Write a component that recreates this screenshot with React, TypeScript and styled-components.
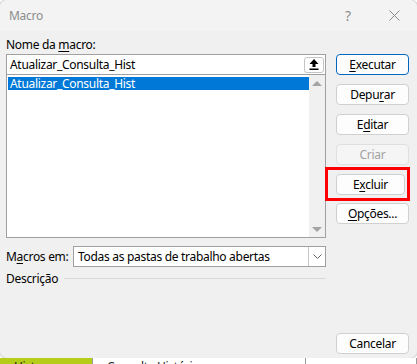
import React from 'react';
import styled, { createGlobalStyle } from 'styled-components';

const GlobalStyle = createGlobalStyle`
  html, body {
    margin: 0;
    padding: 0;
    background: #ffffff;
  }
  body {
    font-family: "Noto Sans", "Open Sans", sans-serif;
    font-size: 12px;
    letter-spacing: -0.3px;
    color: #000;
  }
`;

const Screen = styled.div`
  width: 417px;
  height: 364px;
  overflow: hidden;
  display: flex;
  flex-direction: column;
  background: #ffffff;
`;

const Dialog = styled.div`
  height: 358px;
  flex: none;
  border-radius: 7px;
  overflow: hidden;
  background: #f0f0f0;
  display: flex;
  flex-direction: column;
  box-shadow: 0 0 0 1px #d6d6d6;
`;

const TitleBar = styled.div`
  height: 31px;
  flex: none;
  display: flex;
  align-items: center;
  background: #f3f3f3;
  padding-left: 9px;
`;

const Title = styled.div`
  flex: 1;
  color: #8c8c8c;
  font-size: 12px;
`;

const TitleButton = styled.div`
  width: 46px;
  height: 31px;
  display: flex;
  align-items: center;
  justify-content: center;
  color: #8c8c8c;
  font-size: 14px;
`;

const Body = styled.div`
  flex: 1;
  display: grid;
  grid-template-columns: 320px 73px;
  column-gap: 10px;
  padding: 6px 8px 4px 6px;
`;

const LeftColumn = styled.div`
  display: flex;
  flex-direction: column;
`;

const RightColumn = styled.div`
  display: flex;
  flex-direction: column;
  padding-top: 17px;
`;

const Label = styled.div`
  height: 17px;
  line-height: 15px;
  white-space: nowrap;
`;

const U = styled.span`
  text-decoration: underline;
  text-underline-offset: 2px;
`;

const NameInput = styled.div`
  height: 19px;
  border: 1px solid #a0a0a0;
  border-bottom: none;
  background: #fff;
  display: flex;
  align-items: center;
  padding-left: 3px;
  padding-right: 1px;
`;

const InputText = styled.div`
  flex: 1;
  white-space: nowrap;
`;

const UpButton = styled.div`
  width: 18px;
  height: 14px;
  border: 1px solid #c4c4c4;
  border-radius: 3px;
  background: #fff;
  display: flex;
  align-items: center;
  justify-content: center;
`;

const ListBox = styled.div`
  height: 159px;
  border: 1px solid #a0a0a0;
  background: #fff;
  display: flex;
  padding: 2px 0 1px 1px;
`;

const ListItems = styled.div`
  flex: 1;
`;

const ListItem = styled.div<{ selected?: boolean }>`
  height: 13px;
  line-height: 13px;
  padding-left: 2px;
  background: ${(p) => (p.selected ? '#0078d7' : 'transparent')};
  color: ${(p) => (p.selected ? '#fff' : '#000')};
`;

const ScrollBar = styled.div`
  width: 16px;
  background: #f0f0f0;
  margin-top: -2px;
  margin-bottom: -1px;
  display: flex;
  flex-direction: column;
  justify-content: space-between;
  align-items: center;
  padding: 6px 0 5px;
`;

const Arrow = styled.div<{ down?: boolean }>`
  width: 0;
  height: 0;
  border-left: 5px solid transparent;
  border-right: 5px solid transparent;
  ${(p) =>
    p.down
      ? 'border-top: 5px solid #a3a3a3;'
      : 'border-bottom: 5px solid #a3a3a3;'}
`;

const SourceRow = styled.div`
  margin-top: 8px;
  display: flex;
  align-items: center;
  height: 21px;
`;

const SourceLabel = styled.div`
  width: 67px;
  white-space: nowrap;
`;

const Select = styled.div`
  flex: 1;
  height: 19px;
  border: 1px solid #a0a0a0;
  background: #fff;
  display: flex;
  align-items: center;
  padding-left: 4px;
`;

const SelectText = styled.div`
  flex: 1;
  white-space: nowrap;
`;

const Chevron = styled.div`
  width: 16px;
  height: 19px;
  border-left: 1px solid #c8c8c8;
  display: flex;
  align-items: center;
  justify-content: center;
`;

const DescRow = styled.div`
  margin-top: 2px;
  display: flex;
  align-items: center;
  gap: 6px;
  height: 18px;
`;

const DescLine = styled.div`
  flex: 1;
  height: 1px;
  background: #d8d8d8;
`;

const Button = styled.div<{ primary?: boolean; disabled?: boolean }>`
  height: 21px;
  flex: none;
  box-sizing: border-box;
  border: 1px solid ${(p) => (p.primary ? '#0067c0' : p.disabled ? '#e0e0e0' : '#d0d0d0')};
  border-radius: 4px;
  background: ${(p) => (p.disabled ? '#f5f5f5' : '#fdfdfd')};
  color: ${(p) => (p.disabled ? '#a2a2a2' : '#000')};
  display: flex;
  align-items: center;
  justify-content: center;
  margin-bottom: 9px;
  white-space: nowrap;
  &:last-child {
    margin-bottom: 0;
  }
`;

const Highlight = styled.div`
  margin: -7px -1px 2px -11px;
  padding: 4px 2px 3px 8px;
  border: 3px solid #ff0000;
  & > div {
    margin-bottom: 0;
  }
`;

const Spacer = styled.div`
  flex: 1;
`;

const Sheet = styled.div`
  flex: 1;
  display: flex;
  overflow: hidden;
  background: #fff;
`;

const Cell = styled.div<{ w: number; bg: string }>`
  width: ${(p) => p.w}px;
  box-sizing: border-box;
  flex: none;
  background: ${(p) => p.bg};
  border-right: 1px solid #9a9a9a;
  font-size: 12px;
  line-height: 12px;
  padding: 3px 0 0 14px;
  color: #222;
  white-space: nowrap;
  overflow: hidden;
`;

export default function App() {
  return (
    <Screen>
      <GlobalStyle />
      <Dialog>
        <TitleBar>
          <Title>Macro</Title>
          <TitleButton>?</TitleButton>
          <TitleButton>
            <svg width="11" height="11" viewBox="0 0 11 11">
              <path d="M0.5 0.5 L10.5 10.5 M10.5 0.5 L0.5 10.5" stroke="#8c8c8c" strokeWidth="1" />
            </svg>
          </TitleButton>
        </TitleBar>
        <Body>
          <LeftColumn>
            <Label>
              Nome da <U>m</U>acro:
            </Label>
            <NameInput>
              <InputText>Atualizar_Consulta_Hist</InputText>
              <UpButton>
                <svg width="10" height="11" viewBox="0 0 10 11">
                  <path d="M5 0 L9.5 5 L6.5 5 L6.5 8 L3.5 8 L3.5 5 L0.5 5 Z" fill="#000" />
                  <rect x="0.5" y="9.5" width="9" height="1.5" fill="#000" />
                </svg>
              </UpButton>
            </NameInput>
            <ListBox>
              <ListItems>
                <ListItem selected>Atualizar_Consulta_Hist</ListItem>
              </ListItems>
              <ScrollBar>
                <Arrow />
                <Arrow down />
              </ScrollBar>
            </ListBox>
            <SourceRow>
              <SourceLabel>
                M<U>a</U>cros em:
              </SourceLabel>
              <Select>
                <SelectText>Todas as pastas de trabalho abertas</SelectText>
                <Chevron>
                  <svg width="9" height="5" viewBox="0 0 9 5">
                    <path d="M0.5 0.5 L4.5 4.5 L8.5 0.5" stroke="#606060" fill="none" strokeWidth="1" />
                  </svg>
                </Chevron>
              </Select>
            </SourceRow>
            <DescRow>
              <span>Descrição</span>
              <DescLine />
            </DescRow>
          </LeftColumn>
          <RightColumn>
            <Button primary>
              <span>
                <U>E</U>xecutar
              </span>
            </Button>
            <Button>
              <span>
                Depu<U>r</U>ar
              </span>
            </Button>
            <Button>
              <span>
                E<U>d</U>itar
              </span>
            </Button>
            <Button disabled>Criar</Button>
            <Highlight>
              <Button>
                <span>
                  E<U>x</U>cluir
                </span>
              </Button>
            </Highlight>
            <Button>
              <span>
                <U>O</U>pções...
              </span>
            </Button>
            <Spacer />
            <Button>Cancelar</Button>
          </RightColumn>
        </Body>
      </Dialog>
      <Sheet>
        <Cell w={93} bg="#b5cc18">
          Hist
        </Cell>
        <Cell w={213} bg="#ffffff">
          Consulta Histórico
        </Cell>
        <Cell w={111} bg="#ffffff">
          {' '}
        </Cell>
      </Sheet>
    </Screen>
  );
}
